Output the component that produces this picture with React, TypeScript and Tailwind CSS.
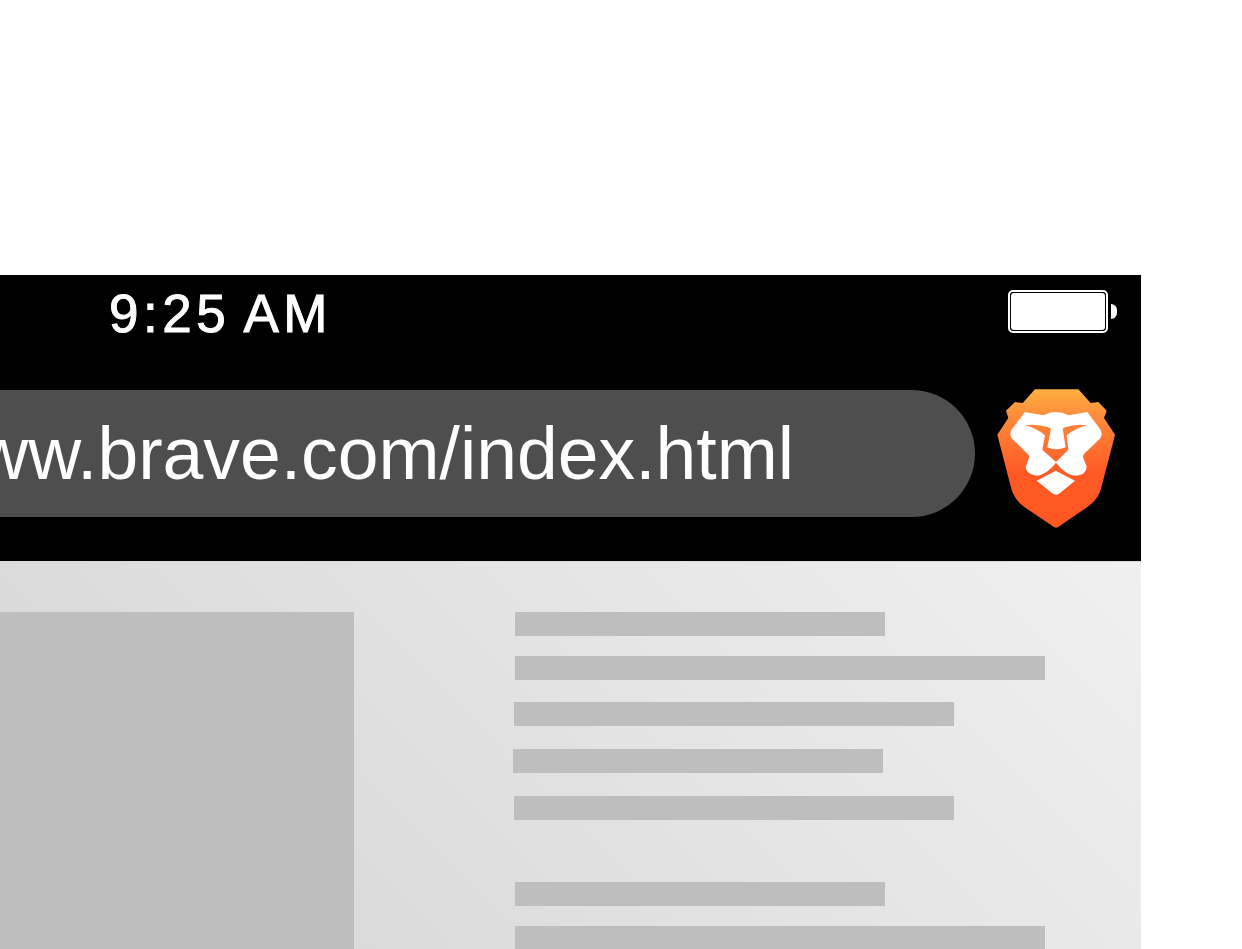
export default function App() {
  return (
    <div className="h-[949px] w-[1242px] overflow-hidden bg-white pt-[275px] font-['Liberation_Sans',Arial,sans-serif]">
      <div className="w-[1141px]">
        <header className="h-[286px] bg-black">
          <div className="flex h-[115px] items-start">
            <span className="ml-[109px] mt-[10px] text-[53px] leading-[58px] tracking-[4.5px] text-white [-webkit-text-stroke:1px_white] [word-spacing:-3px]">
              9:25 AM
            </span>
            <div className="ml-auto mr-[24px] mt-[15px] flex items-center">
              <div className="h-[43px] w-[100px] rounded-[5px] border-2 border-white bg-black p-px">
                <div className="h-full w-full rounded-[3px] bg-white" />
              </div>
              <div className="ml-[3px] h-[15px] w-[6px] rounded-r-[6px] bg-white" />
            </div>
          </div>
          <div className="flex items-start">
            <div className="flex h-[127px] w-[975px] items-center justify-end overflow-hidden whitespace-nowrap rounded-r-[64px] bg-[#4e4e4e] pr-[181px] pt-[2px] text-[73.3px] text-white">
              www.brave.com/index.html
            </div>
            <svg className="ml-[22px] mt-[-1px] h-[141px] w-[120px]" viewBox="51 43 360 423">
              <defs>
                <linearGradient id="lion" x1="0" y1="44" x2="0" y2="460" gradientUnits="userSpaceOnUse">
                  <stop offset="0" stopColor="#fbb040" />
                  <stop offset="0.2" stopColor="#ff8a3c" />
                  <stop offset="0.6" stopColor="#ff5a25" />
                  <stop offset="1" stopColor="#ff5722" />
                </linearGradient>
              </defs>
              <path
                fill="url(#lion)"
                d="M165 44 L295 44 L332 85 L355 82 L380 108 L372 130 L405 180 L365 335 Q358 372 325 395 L242 452 Q228 466 214 452 L130 395 Q100 372 92 335 L52 180 L85 130 L78 108 L105 82 L128 85 Z"
              />
              <path
                fill="#fff"
                d="M135 112 L190 122 Q228 102 266 122 L322 112 L362 166 Q370 182 358 194 L314 236 Q306 244 311 252 L320 276 Q318 296 300 301 Q288 304 275 302 Q250 292 228 264 Q206 292 180 302 Q168 304 160 301 Q140 296 137 278 L146 252 Q150 244 143 238 L98 194 Q86 182 94 166 Z"
              />
              <path
                fill="url(#lion)"
                d="M135 152 Q172 147 205 158 L213 162 L202 218 Q228 230 257 218 L248 162 L255 158 Q288 147 322 152 Q284 162 260 182 L265 225 L228 262 L187 225 L195 182 Q172 162 135 152 Z"
              />
              <path fill="#fff" d="M170 318 L227 288 L285 318 L240 355 Q228 365 216 355 Z" />
            </svg>
          </div>
        </header>
        <main className="flex h-[388px] overflow-hidden border-t border-[#dadada] bg-linear-[45deg] from-[#d4d4d4] to-[#f0f0f0] pt-[50px]">
          <div className="h-[400px] w-[354px] shrink-0 bg-[#bebebe]" />
          <div className="ml-[159px] flex flex-col items-start">
            <div className="ml-[2px] h-[24px] w-[370px] shrink-0 bg-[#bebebe]" />
            <div className="ml-[2px] mt-[20px] h-[24px] w-[530px] shrink-0 bg-[#bebebe]" />
            <div className="ml-[1px] mt-[22px] h-[24px] w-[440px] shrink-0 bg-[#bebebe]" />
            <div className="mt-[23px] h-[24px] w-[370px] shrink-0 bg-[#bebebe]" />
            <div className="ml-[1px] mt-[23px] h-[24px] w-[440px] shrink-0 bg-[#bebebe]" />
            <div className="ml-[2px] mt-[62px] h-[24px] w-[370px] shrink-0 bg-[#bebebe]" />
            <div className="ml-[2px] mt-[20px] h-[24px] w-[530px] shrink-0 bg-[#bebebe]" />
          </div>
        </main>
      </div>
    </div>
  );
}
